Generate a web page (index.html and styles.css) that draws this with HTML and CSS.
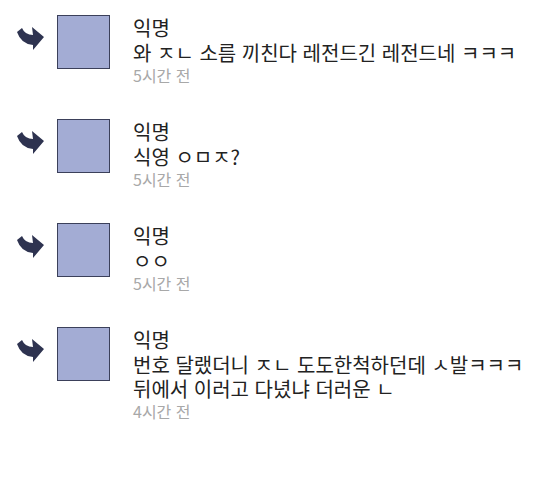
FILE: index.html
```html
<!DOCTYPE html>
<html lang="ko">
<head>
<meta charset="utf-8">
<link rel="stylesheet" href="styles.css">
</head>
<body>
<ul class="list">
  <li class="item">
    <svg class="arrow" width="28" height="24" viewBox="0 0 28 24"><path d="M0,5 L5,1 Q8,8 16,8 L15,0 L27,10 L16,23 L16,18 Q4,17 0,5 Z"/></svg>
    <div class="avatar"></div>
    <div class="body">
      <div class="name">익명</div>
      <div class="msg">와 ㅈㄴ 소름 끼친다 레전드긴 레전드네 ㅋㅋㅋ</div>
      <div class="time">5시간 전</div>
    </div>
  </li>
  <li class="item">
    <svg class="arrow" width="28" height="24" viewBox="0 0 28 24"><path d="M0,5 L5,1 Q8,8 16,8 L15,0 L27,10 L16,23 L16,18 Q4,17 0,5 Z"/></svg>
    <div class="avatar"></div>
    <div class="body">
      <div class="name">익명</div>
      <div class="msg">식영 ㅇㅁㅈ?</div>
      <div class="time">5시간 전</div>
    </div>
  </li>
  <li class="item">
    <svg class="arrow" width="28" height="24" viewBox="0 0 28 24"><path d="M0,5 L5,1 Q8,8 16,8 L15,0 L27,10 L16,23 L16,18 Q4,17 0,5 Z"/></svg>
    <div class="avatar"></div>
    <div class="body">
      <div class="name">익명</div>
      <div class="msg">ㅇㅇ</div>
      <div class="time">5시간 전</div>
    </div>
  </li>
  <li class="item">
    <svg class="arrow" width="28" height="24" viewBox="0 0 28 24"><path d="M0,5 L5,1 Q8,8 16,8 L15,0 L27,10 L16,23 L16,18 Q4,17 0,5 Z"/></svg>
    <div class="avatar"></div>
    <div class="body">
      <div class="name">익명</div>
      <div class="msg">번호 달랬더니 ㅈㄴ 도도한척하던데 ㅅ발ㅋㅋㅋ<br>뒤에서 이러고 다녔냐 더러운 ㄴ</div>
      <div class="time">4시간 전</div>
    </div>
  </li>
</ul>
</body>
</html>
```
FILE: styles.css
```css
html, body {
  margin: 0;
  padding: 0;
  background: #ffffff;
}
body {
  font-family: "Noto Sans CJK KR", "Noto Sans", sans-serif;
  color: #222222;
}
.list {
  list-style: none;
  margin: 0;
  padding: 15px 0 0 0;
  display: flex;
  flex-direction: column;
  gap: 34px;
}
.item {
  display: flex;
  align-items: flex-start;
  padding-left: 17px;
}
.arrow {
  flex: none;
  margin-top: 12px;
  fill: #2e3350;
}
.avatar {
  flex: none;
  width: 51px;
  height: 52px;
  margin-left: 12px;
  background: #a3acd4;
  border: 1px solid #3b405a;
}
.body {
  margin-left: 23px;
}
.name {
  font-size: 20px;
  line-height: 26px;
  font-weight: 400;
}
.msg {
  font-size: 20px;
  line-height: 24px;
}
.time {
  font-size: 16px;
  line-height: 20px;
  color: #a8a8a8;
}
```
